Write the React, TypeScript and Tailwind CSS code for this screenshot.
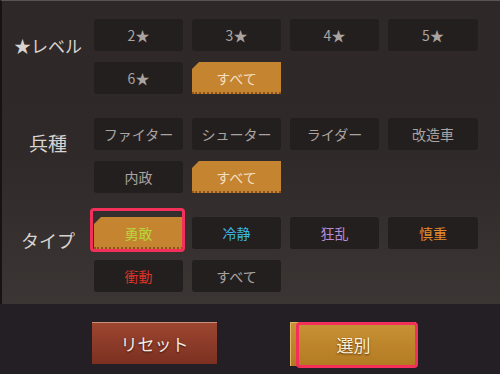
import React from 'react';

type Opt = { label: string; color?: string; active?: boolean; marked?: boolean };

const sections: { title: string; titleClass: string; options: Opt[] }[] = [
  {
    title: '★レベル',
    titleClass: 'text-[17px] pt-[14px]',
    options: [
      { label: '2★' },
      { label: '3★' },
      { label: '4★' },
      { label: '5★' },
      { label: '6★' },
      { label: 'すべて', active: true },
    ],
  },
  {
    title: '兵種',
    titleClass: 'text-[19px] pt-[11px]',
    options: [
      { label: 'ファイター' },
      { label: 'シューター' },
      { label: 'ライダー' },
      { label: '改造車' },
      { label: '内政' },
      { label: 'すべて', active: true },
    ],
  },
  {
    title: 'タイプ',
    titleClass: 'text-[18px] pt-[10px]',
    options: [
      { label: '勇敢', color: 'text-[#b9d53c]', active: true, marked: true },
      { label: '冷静', color: 'text-[#3cb6e2]' },
      { label: '狂乱', color: 'text-[#b88ad6]' },
      { label: '慎重', color: 'text-[#e38c2e]' },
      { label: '衝動', color: 'text-[#dc3228]' },
      { label: 'すべて' },
    ],
  },
];

function OptionButton({ opt }: { opt: Opt }) {
  const base = 'relative h-[32px] flex items-center justify-center text-[14px]';
  if (opt.active) {
    return (
      <div className={base}>
        <div className="absolute inset-0 bg-[#c5842f] border-b-2 border-dotted border-[#8f5420] [clip-path:polygon(7px_0,100%_0,100%_100%,0_100%,0_7px)]" />
        <span className={`relative ${opt.color ?? 'text-[#f3dfc2]'}`}>{opt.label}</span>
        {opt.marked && (
          <div className="absolute -top-[9px] -bottom-[3px] -left-[4px] -right-[2px] border-[3px] border-[#f2305a] rounded-[4px]" />
        )}
      </div>
    );
  }
  return (
    <div className={`${base} bg-[#241f1f] rounded-[3px]`}>
      <span className={opt.color ?? 'text-[#aaa4a1]'}>{opt.label}</span>
    </div>
  );
}

export default function App() {
  return (
    <div
      className="w-[500px] h-[374px] overflow-hidden bg-[#241f25] flex flex-col"
      style={{ fontFamily: '"Noto Sans CJK JP", "Noto Sans", sans-serif' }}
    >
      {/* filter panel */}
      <div className="h-[304px] shrink-0 border-t border-[#5a5552] border-l-2 border-l-[#171313] bg-gradient-to-b from-[#2e2928] via-[#2f2a29] to-[#3b3534] pt-[18px] flex flex-col gap-[24px]">
        {sections.map((s) => (
          <div key={s.title} className="flex">
            <div className={`w-[92px] shrink-0 text-center text-[#d9d4d0] ${s.titleClass}`}>
              {s.title}
            </div>
            <div className="grid grid-cols-[89px_89px_89px_90px] gap-x-[9px] gap-y-[11px]">
              {s.options.map((o, i) => (
                <OptionButton key={i} opt={o} />
              ))}
            </div>
          </div>
        ))}
      </div>

      {/* actions */}
      <div className="flex pl-[92px] pt-[18px] gap-[73px]">
        <button className="w-[125px] h-[42px] bg-gradient-to-b from-[#9c4630] to-[#7c3021] border-t border-[#c98f78] text-[#f2ebe4] text-[17px] [text-shadow:0_1px_2px_#3a120a]">
          リセット
        </button>
        <div className="relative">
          <button className="w-[126px] h-[44px] bg-gradient-to-b from-[#c99235] to-[#b37a22] border-t border-l border-[#e2b86a] text-[#fbf1dc] text-[17px] [text-shadow:0_1px_2px_#5a3208]">
            選別
          </button>
          <div className="absolute top-[0px] -bottom-[2px] left-[6px] -right-[2px] border-[3px] border-[#f2305a] rounded-[4px]" />
        </div>
      </div>
    </div>
  );
}
